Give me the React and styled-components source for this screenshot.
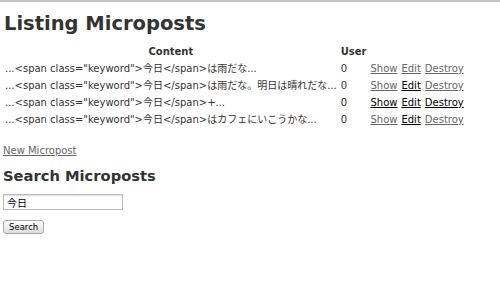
import styled, { createGlobalStyle } from "styled-components"

const GlobalStyle = createGlobalStyle`
    html, body {
        margin: 0;
        background: #fff;
    }
    body {
        border-top: 2px solid #c8c8c8;
        color: #333;
        font-family: Verdana, "DejaVu Sans", "Noto Sans CJK JP", sans-serif;
        font-size: 10px;
        line-height: 15px;
    }
`

const posts = [
    { id: 1, content: '...<span class="keyword">今日</span>は雨だな...', user: 0, show: true, edit: true, destroy: true },
    { id: 2, content: '...<span class="keyword">今日</span>は雨だな。明日は晴れだな...', user: 0, show: true, edit: false, destroy: true },
    { id: 3, content: '...<span class="keyword">今日</span>+...', user: 0, show: false, edit: false, destroy: false },
    { id: 4, content: '...<span class="keyword">今日</span>はカフェにいこうかな...', user: 0, show: true, edit: false, destroy: true },
]

const App = () => {
    return (
        <Page>
            <GlobalStyle />
            <Title>Listing Microposts</Title>

            <Table>
                <thead>
                    <tr>
                        <Th>Content</Th>
                        <Th>User</Th>
                        <Th></Th>
                        <Th></Th>
                        <Th></Th>
                    </tr>
                </thead>
                <tbody>
                    {posts.map((post) => (
                        <tr key={post.id}>
                            <Td>{post.content}</Td>
                            <Td>{post.user}</Td>
                            <Td><Action href="#" $visited={post.show}>Show</Action></Td>
                            <Td><Action href="#" $visited={post.edit}>Edit</Action></Td>
                            <Td><Action href="#" $visited={post.destroy}>Destroy</Action></Td>
                        </tr>
                    ))}
                </tbody>
            </Table>

            <NewLink href="#">New Micropost</NewLink>

            <SubTitle>Search Microposts</SubTitle>

            <SearchForm onSubmit={(e) => e.preventDefault()}>
                <SearchInput type="text" defaultValue="今日" />
                <SearchButton type="submit">Search</SearchButton>
            </SearchForm>
        </Page>
    )
}

export default App

const Page = styled.div`
    padding: 0 3px;
`

const Title = styled.h1`
    margin: 10px 0 6px 1px;
    font-size: 19.5px;
    line-height: 24px;
    font-weight: bold;
`

const Table = styled.table`
    border-spacing: 2px;
    margin-left: -1px;
`

const Th = styled.th`
    padding: 0 1px;
    font-weight: bold;
    text-align: center;
`

const Td = styled.td`
    padding: 0 1px;
    white-space: nowrap;
`

const Action = styled.a`
    color: ${(p) => (p.$visited ? "#666" : "#000")};
    text-decoration: underline;
`

const NewLink = styled.a`
    display: inline-block;
    margin-top: 14px;
    color: #666;
`

const SubTitle = styled.h2`
    margin: 8px 0 8px;
    font-size: 14.7px;
    line-height: 20px;
    font-weight: bold;
`

const SearchForm = styled.form`
    display: flex;
    flex-direction: column;
    align-items: flex-start;
    gap: 10px;
`

const SearchInput = styled.input`
    box-sizing: border-box;
    width: 120px;
    height: 16px;
    padding: 0 3px;
    border: 1px solid #bbb;
    box-shadow: inset 0 1px 1px #ddd;
    font-family: Verdana, "DejaVu Sans", "Noto Sans CJK JP", sans-serif;
    font-size: 10px;
    color: #000;
`

const SearchButton = styled.button`
    height: 14px;
    padding: 0 5px;
    border: 1px solid #aaa;
    border-radius: 3px;
    background: linear-gradient(#fff, #ddd);
    font-family: "Lucida Grande", "DejaVu Sans", sans-serif;
    font-size: 8.5px;
    line-height: 12px;
    color: #000;
`
